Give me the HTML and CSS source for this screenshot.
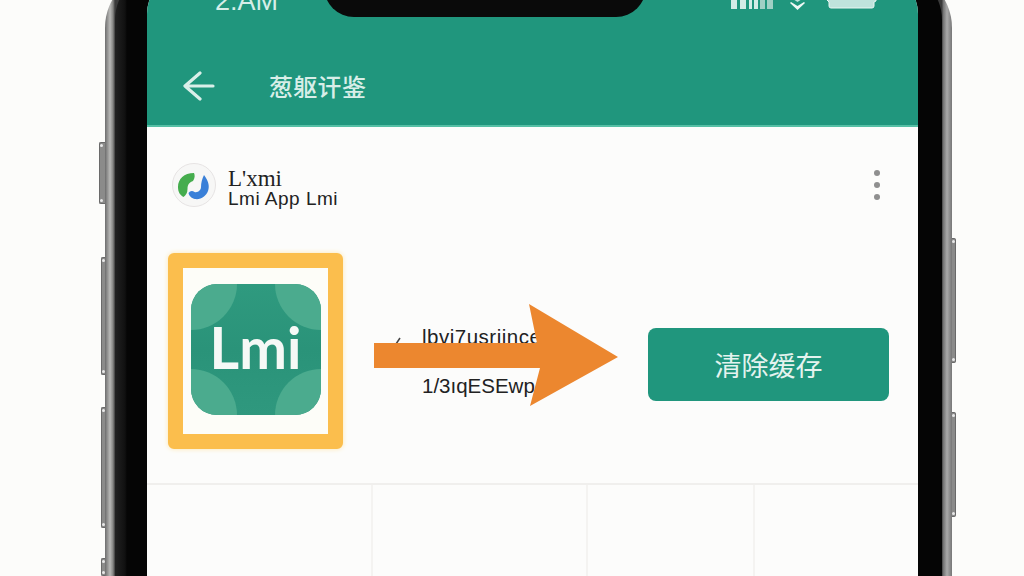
FILE: index.html
```html
<!DOCTYPE html>
<html lang="zh">
<head>
<meta charset="utf-8">
<title>Lmi</title>
<link rel="stylesheet" href="styles.css">
</head>
<body>
<div class="phone">
  <span class="side-btn left b1"></span>
  <span class="side-btn left b2"></span>
  <span class="side-btn left b3"></span>
  <span class="side-btn left b4"></span>
  <span class="side-btn right r1"></span>
  <span class="side-btn right r2"></span>
  <div class="metal">
    <div class="bezel">
      <div class="screen">
        <header class="header">
          <div class="notch"></div>
          <div class="status">
            <span class="time">2:AM</span>
            <div class="status-icons">
              <svg class="signal" width="42" height="12" viewBox="0 0 42 12"><path fill="#d4ece6" d="M0 3h6v9H0zM9 0h6v12H9zM18 0h3v12h-3zM23 0h4v12h-4z"/><path fill="#9fd0c4" d="M29 0h5v12h-5zM36 0h6v12h-6z"/></svg>
              <svg class="wifi" width="15" height="12" viewBox="0 0 15 12"><path fill="#eef8f5" d="M1 4l6.500 4 6.500-4 1 1-7.500 7L0 5z"/><path fill="#bfe3dc" d="M3 1h9L7.500 4z"/></svg>
              <svg class="battery" width="52" height="12" viewBox="0 0 52 12"><path fill="#bfe3dc" stroke="#e9f6f3" d="M1 0h49v4l-2 1v4q0 2-2 2H5q-2 0-2-2V5L1 3z"/></svg>
            </div>
          </div>
          <div class="toolbar">
            <svg class="back" width="32" height="30" viewBox="0 0 32 30"><path fill="none" stroke="#d9efe9" stroke-width="3.200" stroke-linecap="round" stroke-linejoin="round" d="M17 2L2 15l15 13M3 15h27"/></svg>
            <span class="title">葱躯讦鉴</span>
          </div>
        </header>
        <main class="content">
          <div class="app-row">
            <svg class="app-icon" width="44" height="44" viewBox="0 0 44 44">
              <circle cx="22" cy="22" r="21.500" fill="#f7f7f6" stroke="#e6e3e3"/>
              <path fill="#45ad4e" d="M22 10C12 10 6 16 6 24c0 5 2 8 5.500 10 2.500-2 4-4 4-8 0-5 2.500-7 5.500-8 2-3 2-6 1-8z"/>
              <path fill="#3a80d8" d="M32 12c4 5 6 11 4 16-2 5-7 9-13 8-3-.5-6-3-6.500-6 1.500-2 3.500-3 6-1 3.500 1 6.500-2 6.500-5 0-4 1-8 3-12z"/>
            </svg>
            <div class="app-text">
              <span class="app-name">L'xmi</span>
              <span class="app-sub">Lmi App Lmi</span>
            </div>
            <div class="dots"><i></i><i></i><i></i></div>
          </div>
          <div class="action-row">
            <div class="icon-frame">
              <div class="lmi-logo">
                <span class="corner tl"></span>
                <span class="corner tr"></span>
                <span class="corner bl"></span>
                <span class="corner br"></span>
                <span class="lmi-text">Lmi</span>
              </div>
            </div>
            <div class="details">
              <svg class="tick" width="8" height="8" viewBox="0 0 8 8"><path fill="none" stroke="#444" stroke-width="1.500" d="M6 1L2 7"/></svg>
              <span class="detail first">lbvi7usriince</span>
              <span class="detail">1/3ıqESEwp</span>
              <svg class="arrow" width="245" height="103" viewBox="0 0 245 103"><path fill="#ec872f" d="M0 39h163L155 0l89 53-88 49 10-38H0z"/></svg>
            </div>
            <button class="clear-btn">清除缓存</button>
          </div>
          <div class="grid-row">
            <div class="cell c1"></div>
            <div class="cell c2"></div>
            <div class="cell c3"></div>
            <div class="cell c4"></div>
          </div>
        </main>
      </div>
    </div>
  </div>
</div>
</body>
</html>
```
FILE: styles.css
```css
* { box-sizing: border-box; }
html, body { margin: 0; height: 100%; overflow: hidden; }
body {
  background: #fcfcfa;
  font-family: "Liberation Sans", "Noto Sans CJK SC", sans-serif;
  padding: 0 72px 0 105px;
}
.phone { position: relative; height: 606px; margin-top: -30px; }
.metal {
  height: 100%;
  padding: 0 10px;
  border-radius: 58px 58px 0 0;
  background: linear-gradient(90deg, #6d6d6d 0, #b9b9b7 5px, #858583 8px, #3a3a3a 10px, #3a3a3a calc(100% - 10px), #6e6e6e calc(100% - 9px), #aaa calc(100% - 5px), #777 100%);
}
.bezel {
  height: 100%;
  background: linear-gradient(90deg, #222 0, #101010 10px, #050505 12px, #050505 100%);
  border-radius: 50px 50px 0 0;
  padding: 0 24px 0 32px;
}
.screen {
  height: 100%;
  background: #fcfcfb;
  border-radius: 44px 44px 0 0;
  overflow: hidden;
  display: flex;
  flex-direction: column;
}
.side-btn { position: absolute; background: #8b8b8a; border: 1px solid #6a6a6a; }
.side-btn::before, .side-btn::after { content: ""; position: absolute; width: 3px; height: 3px; border-radius: 50%; background: #e8e8e8; left: 0; }
.side-btn::before { top: 1px; }
.side-btn::after { bottom: 1px; }
.side-btn.left { border-radius: 2px 0 0 2px; border-right: 0; }
.side-btn.right { right: -4px; width: 4px; border-radius: 0 2px 2px 0; border-left: 0; }
.b1 { left: -6px; width: 6px; top: 172px; height: 62px; }
.b2 { left: -4px; width: 4px; top: 287px; height: 118px; }
.b3 { left: -4px; width: 4px; top: 437px; height: 121px; }
.b4 { left: -4px; width: 4px; top: 588px; height: 18px; }
.r1 { top: 268px; height: 125px; }
.r2 { top: 442px; height: 105px; }

.header { position: relative; flex: none; height: 157px; background: #20967d; border-bottom: 2px solid #56bfa5; }
.notch { position: absolute; top: 0; left: 177px; width: 322px; height: 47px; background: #0a0a0a; border-radius: 0 0 30px 30px; }
.status { display: flex; justify-content: space-between; align-items: flex-end; height: 46px; padding: 0 40px 0 68px; }
.time { color: #d6eee8; font-size: 27px; line-height: 26px; margin-bottom: 2px; }
.status-icons { display: flex; align-items: flex-end; margin-bottom: 7px; }
.wifi { margin-left: 17px; margin-bottom: -1px; }
.battery { margin-left: 21px; }
.toolbar { display: flex; align-items: center; gap: 54px; margin-top: 54px; padding-left: 36px; }
.title { color: #d8eee8; font-size: 24px; font-weight: 500; line-height: 30px; letter-spacing: 0.3px; margin-top: 1px; font-family: "Noto Sans CJK SC", sans-serif; }

.content { flex: 1; min-height: 0; display: flex; flex-direction: column; }
.app-row { flex: none; display: flex; align-items: center; height: 72px; margin-top: 22px; padding: 0 38px 0 25px; }
.app-icon { flex: none; }
.app-text { display: flex; flex-direction: column; margin-left: 12px; padding-top: 8px; color: #222; flex: 1; }
.app-name { font-family: "Liberation Serif", serif; font-size: 23px; line-height: 20px; }
.app-sub { font-size: 19px; line-height: 20px; letter-spacing: 0.5px; }
.dots { display: flex; flex-direction: column; gap: 6px; }
.dots i { width: 6px; height: 6px; border-radius: 50%; background: #8f8f8f; }

.action-row { flex: none; display: flex; align-items: center; height: 196px; margin-top: 32px; padding: 0 29px 0 21px; }
.icon-frame { flex: none; width: 175px; height: 196px; padding-bottom: 4px; background: #fdfdf8; border: 15px solid #fbbe4d; border-radius: 6px; display: flex; align-items: center; justify-content: center; box-shadow: 0 0 5px #fde7b0; }
.lmi-logo { position: relative; flex: none; width: 130px; height: 131px; background: linear-gradient(180deg, #2f9a7f, #2a9379 50%, #2f987e); border-radius: 26px; overflow: hidden; display: flex; align-items: center; justify-content: center; }
.corner { position: absolute; width: 92px; height: 92px; border-radius: 50%; background: #4bab8e; }
.tl { left: -46px; top: -46px; } .tr { right: -46px; top: -46px; }
.bl { left: -46px; bottom: -46px; } .br { right: -46px; bottom: -46px; }
.lmi-text { position: relative; margin-bottom: 4px; color: #f5f9f6; font-family: Lato, sans-serif; font-weight: 700; font-size: 57px; line-height: 60px; }

.details { position: relative; flex: 1; align-self: center; display: flex; flex-direction: column; gap: 25px; margin-top: 20px; padding-left: 79px; color: #222; font-size: 20.500px; line-height: 24px; }
.detail { white-space: nowrap; }
.first { letter-spacing: 0.500px; }
.tick { position: absolute; left: 51px; top: 12px; }
.arrow { position: absolute; left: 31px; top: -21px; }
.clear-btn { flex: none; width: 241px; height: 73px; margin-top: 26px; border: 0; border-radius: 8px; background: #20967d; color: #e4f3ef; font-family: "Noto Sans CJK SC", sans-serif; font-size: 27px; }

.grid-row { flex: 1; min-height: 0; display: flex; margin-top: 34px; border-top: 2px solid #f0efed; }
.cell { border-right: 2px solid #f4f3f1; }
.c1 { width: 226px; } .c2 { width: 215px; } .c3 { width: 167px; } .c4 { flex: 1; border-right: 0; }
```
